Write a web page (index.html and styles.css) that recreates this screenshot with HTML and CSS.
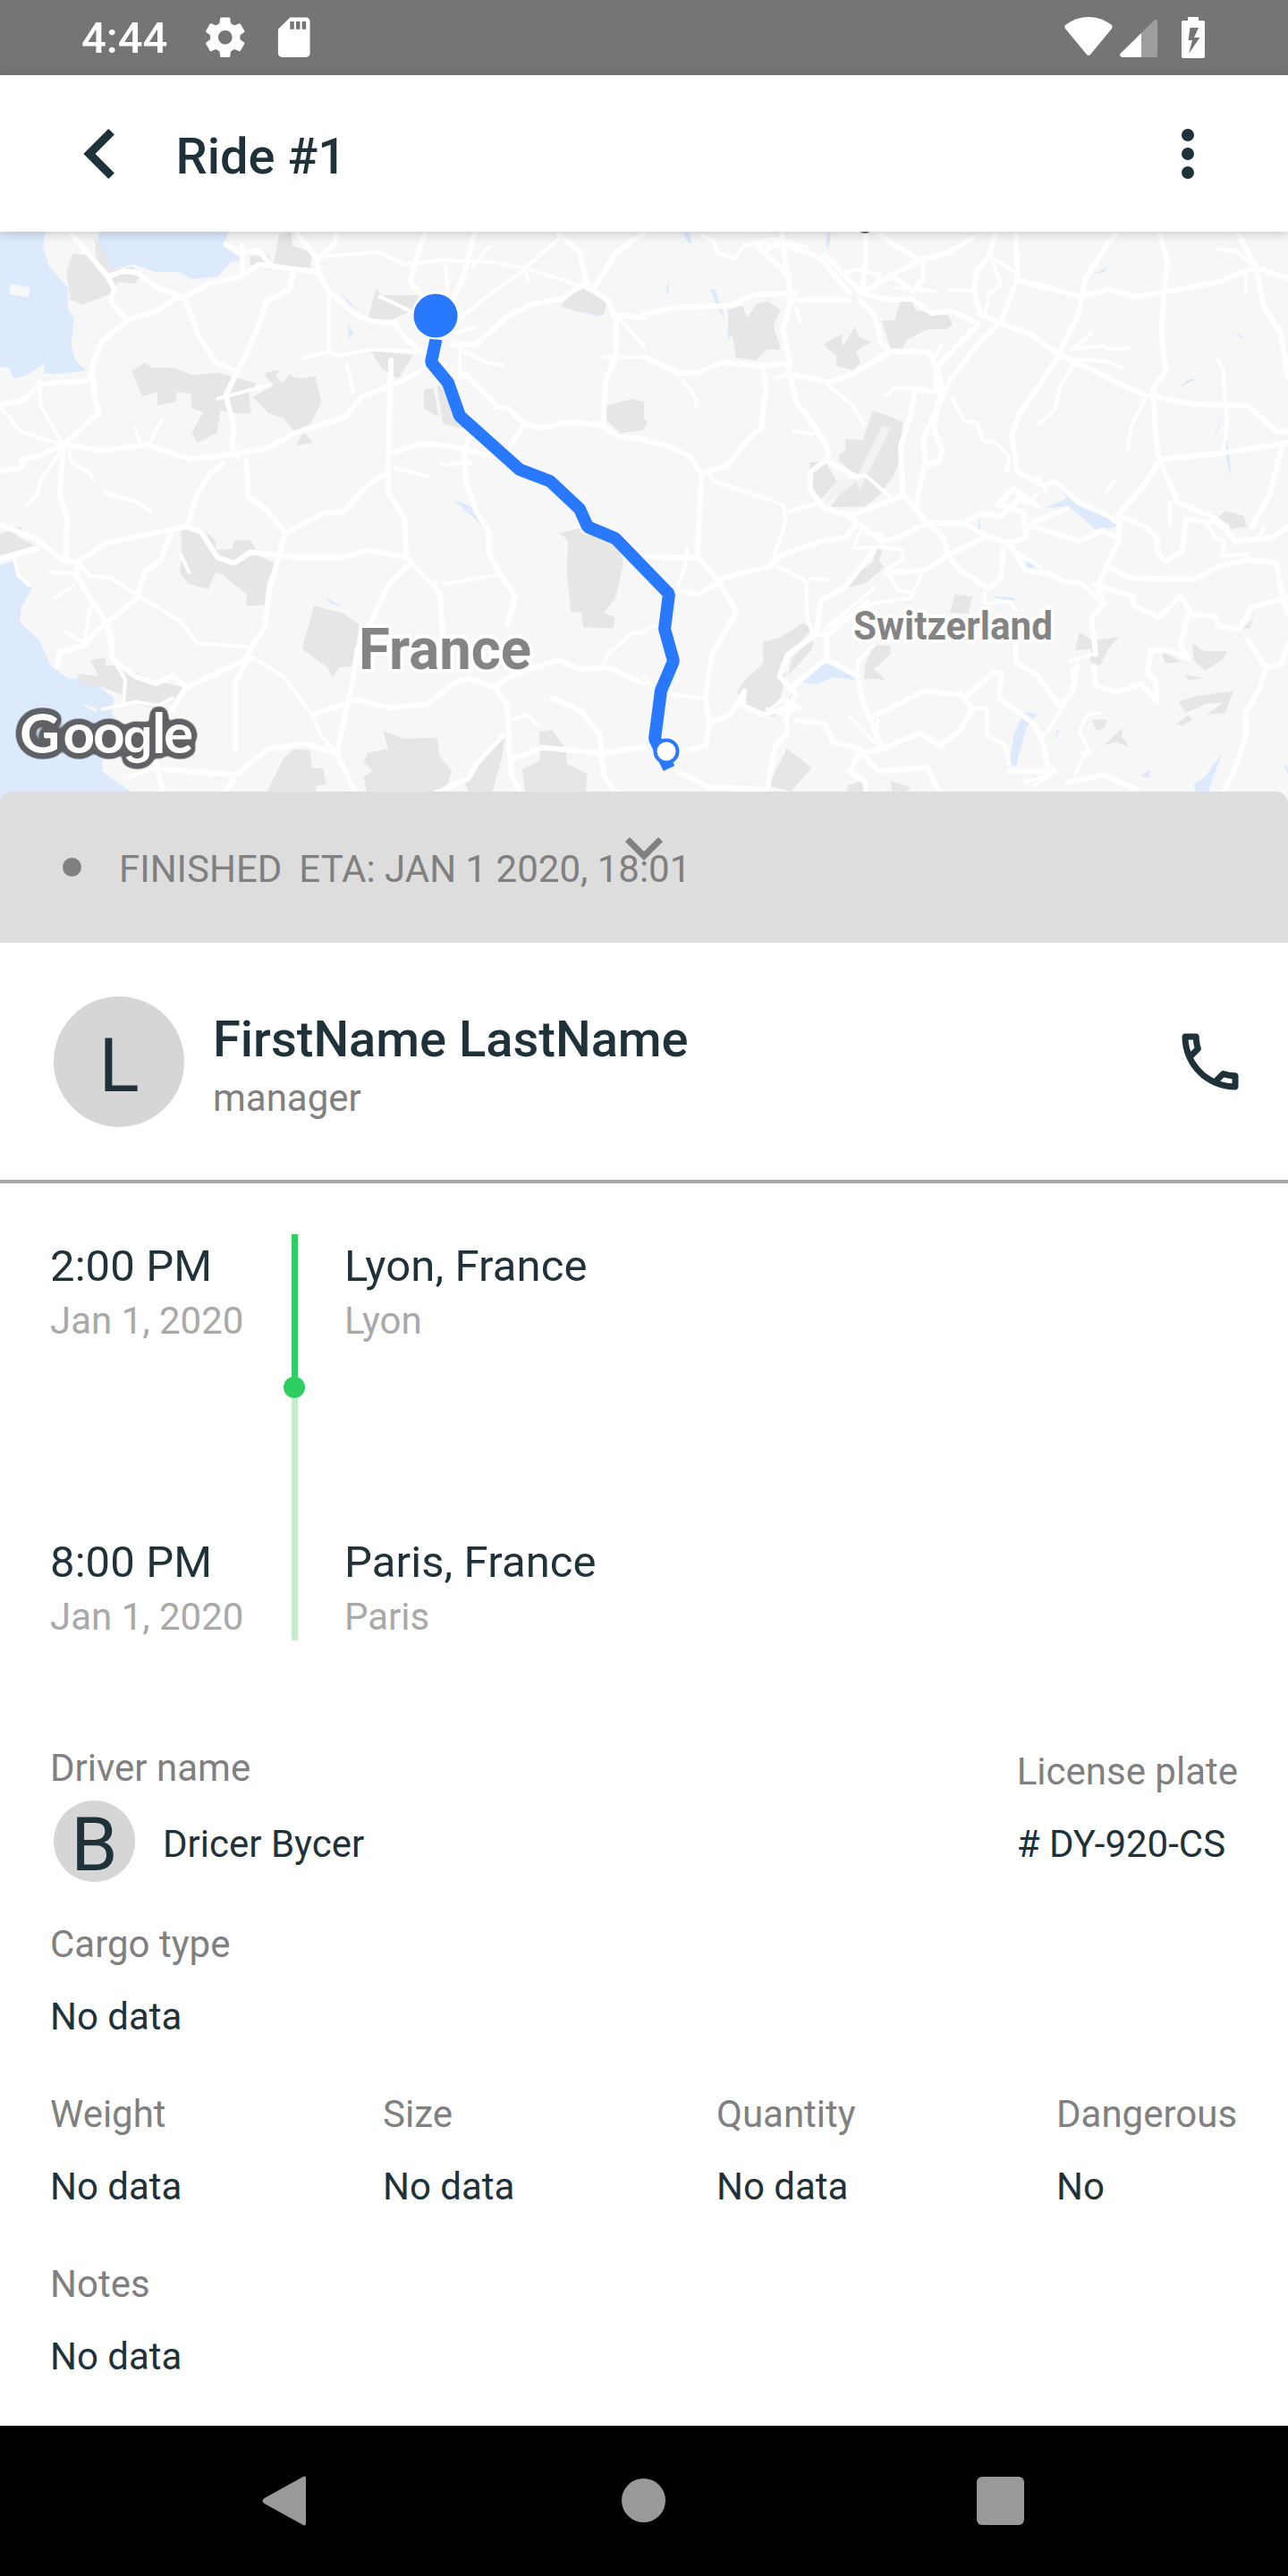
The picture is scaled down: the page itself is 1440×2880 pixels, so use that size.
FILE: index.html
```html
<!DOCTYPE html>
<html lang="en">
<head>
<meta charset="utf-8">
<title>Ride #1</title>
<link rel="stylesheet" href="styles.css">
</head>
<body>
<div class="status">
  <span class="clock">4:44</span>
  <svg class="gear" viewBox="0 0 24 24"><path d="M19.43 12.98c.04-.32.07-.64.07-.98s-.03-.66-.07-.98l2.11-1.65c.19-.15.24-.42.12-.64l-2-3.46c-.12-.22-.39-.3-.61-.22l-2.49 1c-.52-.4-1.08-.73-1.69-.98l-.38-2.65C14.46 2.18 14.25 2 14 2h-4c-.25 0-.46.18-.49.42l-.38 2.65c-.61.25-1.17.59-1.69.98l-2.49-1c-.23-.09-.49 0-.61.22l-2 3.46c-.13.22-.07.49.12.64l2.11 1.65c-.04.32-.07.65-.07.98s.03.66.07.98l-2.11 1.65c-.19.15-.24.42-.12.64l2 3.46c.12.22.39.3.61.22l2.49-1c.52.4 1.08.73 1.69.98l.38 2.65c.03.24.24.42.49.42h4c.25 0 .46-.18.49-.42l.38-2.65c.61-.25 1.17-.59 1.69-.98l2.49 1c.23.09.49 0 .61-.22l2-3.46c.12-.22.07-.49-.12-.64l-2.11-1.65zM12 15.5c-1.93 0-3.5-1.57-3.5-3.5s1.57-3.5 3.5-3.5 3.5 1.57 3.5 3.5-1.57 3.5-3.5 3.5z"/></svg>
  <svg class="card" viewBox="0 0 24 24"><path d="M18 2h-8L4 8v12c0 1.1.9 2 2 2h12c1.1 0 2-.9 2-2V4c0-1.1-.9-2-2-2zm-6 6h-2V4h2v4zm3 0h-2V4h2v4zm3 0h-2V4h2v4z"/></svg>
  <svg class="signals" viewBox="0 0 160 84">
    <path d="M1 28Q13 19 27 19T53 28Q54 30 53 32L29 61Q27 63 25 61L1 32Q-.5 30 1 28Z"/>
    <path d="M86 37V64H64Q61 62 62.500 60Z"/>
    <path d="M86 37L100 23Q104 20.500 104 24V62Q104 64 102 64H86Z" opacity=".3"/>
    <path fill-rule="evenodd" d="M138 19h12v4h5q2 0 2 2v38q0 2-2 2h-22q-2 0-2-2v-38q0-2 2-2h5zM140.500 31l-2 14h4.500l-4 15 12.500-18h-6.500l5-11z"/>
  </svg>
</div>

<header class="appbar">
  <svg class="back" viewBox="0 0 24 24"><path d="M15.410 7.410L14 6l-6 6 6 6 1.410-1.410L10.830 12z"/></svg>
  <h1 class="title">Ride #1</h1>
  <div class="more"><i></i><i></i><i></i></div>
</header>

<svg class="map" viewBox="0 0 1440 640">
  <defs>
    <filter id="halo" x="-20%" y="-40%" width="140%" height="180%" color-interpolation-filters="sRGB">
      <feGaussianBlur in="SourceAlpha" stdDeviation="4"/>
      <feComponentTransfer><feFuncA type="linear" slope="25" intercept="-.7"/></feComponentTransfer>
      <feComposite in2="SourceAlpha" operator="over" result="spread"/>
      <feFlood flood-color="#5f6165"/>
      <feComposite in2="spread" operator="in"/>
      <feMerge><feMergeNode/><feMergeNode in="SourceGraphic"/></feMerge>
    </filter>
  </defs>
  <g transform="translate(0 -9) scale(.459184 .408163)">
    <g class="water">
      <path d="M0 0H112L105 65 120 118 165 175V235L180 258 173 330 182 370 208 403 133 412 106 410 110 382 70 412 35 425 20 394H0Z"/>
      <path d="M243 0H560L547 65 585 85 588 100 560 108 530 145 467 152 437 133H380L325 112 265 126 262 95 237 60Z"/>
      <path d="M0 935L35 922 45 965 78 1000 52 1050 48 1092 95 1142 125 1213 165 1245 215 1245 278 1300 272 1340 300 1400 250 1470V1502L325 1560V1600H0Z"/>
      <path d="M830 187L872 238 846 215ZM848 275L861 300 848 318ZM1104 757L1148 775 1187 840ZM793 1023L832 1048 805 1042ZM1364 226L1472 246 1456 254 1400 238ZM540 945L570 933 545 952Z"/>
    </g>
    <path class="islet" d="M25 165L74 175 70 203 23 193ZM198 1315L237 1328 234 1340Z"/>
    <g class="park">
      <path d="M177 82L235 90 230 40 262 95 265 145 275 190 200 222 170 208 162 130Z"/><path d="M265 126L325 118 338 145 330 165 290 160 270 190Z"/>
      <path d="M680 30L710 22 712 60 760 80 755 125 715 118 665 112ZM608 90L655 85 665 130 610 112Z"/>
      <path d="M320 405L353 380 369 395H420L470 415 530 408 625 438 605 465 612 520H562L537 510 528 573 480 601 467 572 495 517 467 505 465 465 430 462 428 488 383 498V462L346 473Z"/>
      <path d="M643 410L680 400 672 420 688 438 704 413 728 425 768 418 783 490 758 545 718 573 690 532 655 520 615 475 664 445Z"/><path d="M738 570L762 600 722 607Z"/>
      <path d="M917 175L927 196H1020L1000 240 950 266 896 258ZM902 348L1006 360 970 425 930 398Z"/>
      <path d="M1032 455L1055 450 1069 530 1032 508ZM1064 445L1100 440 1130 562 1078 548Z"/>
      <path d="M1364 225L1395 188 1420 178 1478 215 1470 252 1400 238ZM1474 500L1540 480 1568 488V566L1512 573 1478 540Z"/>
      <path d="M440 840L490 835 525 868 527 893 565 892 570 868 610 868 632 910 672 932 650 980 645 1045 600 1047V1015L540 960 525 955 507 1000 460 988 438 955 443 905Z"/>
      <path d="M0 850L55 828 40 855 85 882 0 910ZM765 1046L838 1068 875 1100 860 1212 825 1215 810 1245 797 1215 735 1165Z"/>
      <path d="M1362 848L1410 835 1420 850 1508 870 1517 935 1498 1028 1470 1065 1497 1078 1494 1109 1420 1105 1416 1063 1390 1066 1380 950 1383 870Z"/>
      <path d="M188 1233L240 1240 220 1195 257 1188 258 1210 300 1212 370 1250 445 1270 420 1310 375 1327 300 1308 295 1290 250 1270 195 1262Z"/>
      <path d="M645 1570L690 1465 715 1440 755 1442 760 1490 787 1493 795 1535 770 1540 770 1570ZM932 1388L980 1410 1065 1408 1070 1458 1100 1500 1078 1570H895L885 1515 908 1500 885 1475 895 1450 945 1438ZM1128 1520L1170 1465 1205 1410 1230 1412 1220 1470 1195 1570H1145ZM1272 1495L1315 1470 1313 1392 1345 1387 1378 1440 1380 1480 1430 1508 1425 1570H1280Z"/>
    </g>
    <g class="roads major">
      <path d="M0 497L60 482 95 440 220 430 225 385 248 322 310 265 385 238 425 205 450 200 510 165 590 145 630 112 775 133 800 185 860 245 905 268 960 272 990 320 1030 350"/>
      <path d="M225 385L230 470 240 518 155 605 88 640 55 645 50 670 0 678M155 605L250 622 355 605 465 645 570 632 650 615 715 575 840 530 880 475 980 430 1040 390"/>
      <path d="M175 30L210 75 262 145 278 180 270 215 310 265M262 145L300 130 335 135 375 170 450 205M550 55L580 80 630 75 665 120M590 60L590 130"/>
      <path d="M715 133L705 180 650 213 625 290 600 355 550 470 570 560 565 610 580 640M450 205L485 310 525 380 575 405"/>
      <path d="M600 650L605 750 650 785 695 848 680 905 655 1010 645 1105 610 1165 573 1260V1440M695 848L790 793 835 790 900 712 945 680 950 440 952 375"/>
      <path d="M545 655L515 680 480 740 455 830 375 848 260 875 190 925 155 925 90 865 0 825M455 830L490 845 530 915 570 930 610 900 735 915H830L900 895 990 915M0 918L90 890"/>
      <path d="M155 605L145 745 163 800 160 925M190 925L185 965 262 1100 275 1195 330 1240 380 1260 420 1238 455 1270M610 1190L500 1245 455 1270 415 1335"/>
      <path d="M415 850L390 925 355 950 330 1030 240 1110 205 1155 145 1175 140 1213M262 1090L275 1150"/>
      <path d="M945 680V735L985 810 990 915 1070 1010 1078 1120M990 940L945 990 905 1090 870 1165 860 1250 845 1320 820 1450 870 1570"/>
      <path d="M1140 590L1130 620 1135 710 1160 790 1190 840V900L1220 965 1255 1020 1235 1100M950 630L1020 603 1090 608 1190 635 1240 610 1280 545"/>
      <path d="M1130 410L1210 500 1240 508 1280 550 1320 560 1380 545 1460 550 1510 585 1568 590"/>
      <path d="M1100 330H1160L1240 250 1300 220 1370 205 1420 165 1480 210 1500 260V360L1475 430 1468 550M1490 250L1568 257M1360 30L1410 75 1430 170M1568 25L1500 80 1450 170"/>
      <path d="M1035 25L1010 105 1000 160 1030 200M1155 25L1130 140 1085 250M720 22L770 95 775 133M820 22L815 55 775 95"/>
      <path d="M820 1450L740 1425 650 1440 575 1510 400 1495M575 1510L540 1570M1140 1245L1105 1260 1040 1315 950 1327 870 1305 760 1345M1140 1245L1205 1270 1235 1320 1240 1430 1245 1510 1270 1570"/>
      <path d="M1205 1270L1250 1235 1360 1195 1410 1220 1480 1215 1568 1260M1240 1470L1320 1435 1460 1450 1568 1435M1345 1300L1415 1335 1460 1400 1470 1510 1505 1570M1225 1400L1160 1480 1140 1520 1060 1560M380 1480L400 1570"/>
    </g>
    <g class="roads minor">
      <path d="M95 430L100 500 150 600M0 500L50 570 150 605M330 560L340 600M395 535L365 600M165 610L175 655 220 685 228 705M150 620L100 700 90 745 65 770M255 738L330 760 368 788"/>
      <path d="M800 185L800 350 820 362 905 345 1025 352M740 368L800 352M775 92L920 78 985 112 1070 100 1190 105 1280 122 1400 165M1360 42L1280 120 1285 160M1280 125L1190 195 1110 270"/>
      <path d="M530 480L660 440M845 385L860 460M925 200L1000 240M1085 115L1090 185M1190 65L1150 120M1110 300L1155 285M1060 370L1100 400M1130 350L1185 380 1225 388M1120 330V420M1500 250L1568 335M1470 365H1568M1075 660L1145 655M960 670L1040 692M1568 1120L1540 1120 1480 1180 1465 1215"/>
      <path d="M195 935L220 965 270 970 330 1015 440 1090 480 1150 610 1160M610 1185L690 1240 760 1345 785 1410 820 1450M120 955L190 960M180 990L135 1023M160 1118L205 1150 220 1050M1060 1010L1060 980M1080 988L1210 962M280 1200L305 1250 300 1320M250 1330L330 1310 385 1320 420 1300M440 905L460 955M35 920L45 965 70 990M315 1515L385 1490M1240 1360L1285 1345 1310 1375"/>
    </g>
  </g>
  <g transform="translate(720 -9) scale(.459184 .408163)">
    <g class="water">
      <path d="M95 25L110 22 117 55 107 50ZM447 22H454L451 68 443 60ZM52 185L61 155 60 198ZM160 178L175 182 196 258 183 240ZM200 292L215 293 207 320ZM1095 137L1131 118 1118 135ZM1440 292L1460 315 1450 313ZM1300 452L1320 430 1350 420ZM1410 525L1382 598 1400 560ZM1417 585L1425 630 1430 695 1418 650Z"/>
      <path d="M1000 715L1055 765 1110 785 1155 825 1145 833 1100 837 1050 790 1035 775 975 780 1015 760 1030 750ZM817 803L820 845 810 848ZM715 930L743 892 737 915ZM908 922L950 935V945L925 940ZM848 1020L905 1026 900 1033 860 1026ZM388 1258L400 1230 440 1205 520 1230 515 1250 460 1242 420 1262ZM362 1285L355 1310 352 1300ZM925 1338L958 1342 930 1385 905 1488 890 1480 900 1400ZM1408 1450L1372 1560H1345L1338 1538 1365 1515ZM1232 1493L1230 1517 1208 1515ZM1555 1478L1568 1490V1510ZM1018 1382L1000 1410 1005 1390Z"/>
    </g>
    <g class="park">
      <path d="M205 235L240 225 250 258 275 220 302 212 333 238 315 280 333 345 300 345 272 375 223 366 218 320 205 290ZM578 265H610L625 210 652 212 662 238 740 250 752 275 740 288 690 290 640 318 630 342H600ZM437 330L480 303 485 335 513 283 525 312 552 325 515 350 528 380 510 402 467 390 470 365Z"/>
      <path d="M557 512L630 542 625 640 608 690 570 747 538 775 453 777 480 735 520 695 475 650 473 635 490 620V590L533 593ZM403 655L440 650 470 705 430 757 405 715ZM570 887L580 895 572 925 585 940 540 985 495 998 510 965 555 930Z"/>
      <path d="M290 1145L330 1135 385 1095 410 1108 335 1205 345 1240 320 1350 285 1350 255 1330 225 1285 250 1245 290 1205ZM412 1135L410 1165 350 1240 360 1190ZM348 1438L408 1490 358 1555 305 1540 315 1510ZM535 1247L540 1200 560 1155H600V1180L560 1220 587 1248ZM757 1015L800 1022 790 1070 745 1065ZM1395 808L1415 787 1460 800 1467 830 1430 837ZM495 1540L530 1525 540 1570H495Z"/>
      <path d="M1060 1120L1090 1140 1110 1140 1155 1132 1130 1165 1110 1210 1085 1200 1090 1165 1050 1168ZM1258 1170L1308 1200 1270 1205ZM1335 1148L1358 1170 1420 1172 1410 1192 1368 1225 1338 1195ZM1090 1358L1128 1360 1120 1382 1102 1390ZM1302 1310L1340 1295 1435 1280 1425 1310 1415 1340 1370 1345 1410 1312 1370 1315 1320 1340ZM1315 1235L1360 1245 1325 1250ZM1297 1370L1325 1345 1335 1360 1310 1375ZM1120 1430L1165 1380 1163 1405 1182 1435 1150 1420ZM1485 1080L1475 1110 1458 1108ZM0 535L8 543 0 560ZM600 1525L650 1545 635 1560 605 1560Z"/>
    </g>
    <path class="park-gap" d="M580 555L600 560 525 730 515 700ZM470 705L540 690 430 780Z"/>
    <g class="roads major">
      <path d="M0 248L90 228 210 225 270 195 370 190M355 210H500M525 190L600 210 650 205 700 245 750 240 815 275 715 390M335 25L345 110 360 205 338 290 355 380M345 60L270 55 355 145M350 60L430 95 500 190M440 85L530 190M540 25V110L530 190 670 100 740 80 800 40"/>
      <path d="M570 25L610 60 680 105V150L655 185 600 140M525 210L560 250 580 330 600 350 695 352 712 400 710 460M355 380L290 390 190 380 130 410 85 410 0 365M290 390L297 455 285 560 250 595 205 660 140 685 110 635 50 605 0 595M600 350L510 410 450 435 350 410M350 385L370 490 400 530 450 620 445 650 520 695"/>
      <path d="M855 25L840 90 810 130 803 185 820 250 920 295 940 300 1010 360 1090 400 1150 435 1220 470 1340 495 1470 498 1540 570 1568 568M905 25L910 150 870 265 820 320 745 430 680 590 685 650 660 780 690 820"/>
      <path d="M715 390L725 450 705 560 725 620 720 650 680 665M710 460L660 455 650 520 625 610 630 740 690 820"/>
      <path d="M910 155L1065 200 1130 180 1200 200 1280 185 1400 160 1490 120M1065 200L1060 240 1005 370 970 430 915 520 895 580 910 680 975 720 1000 705 1060 765 1130 800 1155 820M1065 200L1075 150 1120 70 1150 25M1255 25L1275 100 1265 200 1260 300 1270 405 1240 450 1245 570 1255 650 1215 720 1160 790 1155 870 1130 930 1105 990 1120 1040 1090 1080 1100 1180"/>
      <path d="M1445 25L1490 120 1568 150M1490 120L1510 230 1550 300 1568 420M1568 600L1400 630 1255 645 1300 765 1370 795 1420 830M1555 600L1525 740 1480 830"/>
      <path d="M140 685L130 915 20 912 0 915M130 915L180 975 225 1065 165 1180 150 1300 160 1370 150 1430 80 1450M180 975L300 940 340 905 430 870 490 860 520 820 500 800 560 775 630 745M85 1005L130 1015 180 985"/>
      <path d="M500 800L440 780 405 730 405 680 440 650M520 820L580 870 630 855 690 820 780 820 830 855 890 875 930 860 925 790 860 770 900 725 960 775M775 820L820 795 870 800 910 760M690 820L730 860 740 910 830 860M740 910L770 950 840 1000 870 970 875 890M740 910L680 950 590 955M890 875L930 950 990 960 1020 980 1065 985 1120 1040"/>
      <path d="M560 895L490 995 430 1035 420 1125 350 1180 330 1240 370 1290 345 1330 350 1395 320 1430 300 1550M410 1125H450L545 1035M445 1130V1190L360 1270M440 1190L520 1240 530 1300 580 1440 520 1450"/>
      <path d="M160 1370L210 1345 245 1280 240 1320 290 1345 370 1320M370 1360L440 1370 460 1420 530 1440 500 1500 540 1530V1570M530 1450L570 1500 690 1490 720 1560M560 1350L680 1280 770 1290 800 1330 770 1390 720 1430 670 1395 580 1440M780 1300L850 1230H870L865 1300 950 1370 975 1430 980 1480 1000 1500 890 1500"/>
      <path d="M905 1150V1200L960 1240 1010 1320 1040 1290 1055 1210M1095 1215L1100 1265 1150 1285 1210 1260 1250 1310 1245 1250 1225 1230 1235 1170 1280 1170 1325 1190 1305 1150 1330 1060 1305 1020 1255 1080 1190 1045V1020L1110 995M1330 1070L1390 1075 1400 1105 1450 1110 1480 1050 1568 1025"/>
      <path d="M1130 940L1180 970 1340 975 1400 940 1470 920 1540 930 1550 1000 1568 1070M1470 1140L1515 1220 1500 1270 1465 1340V1410L1440 1490 1410 1560M1515 1215L1550 1210 1568 1150M80 1500L160 1545 300 1550M1030 1530L1120 1510 1200 1550"/>
      <path d="M1155 800L1220 830 1250 860V900L1270 925 1310 900 1320 810 1400 820 1440 870 1530 860 1568 830M925 830L1030 780M930 825L1060 870 1115 840 1150 860"/>
    </g>
    <g class="roads minor">
      <path d="M140 30L170 50 180 80 220 95 245 60 310 40 400 65M300 75L340 35M485 135L520 125 575 140 560 175M615 175L710 185M745 180L800 185M840 75L870 170 840 190 830 250M855 100L900 130M1395 70L1440 75 1480 110M1465 130V185"/>
      <path d="M590 470L610 450 680 450M725 330L705 370M750 480L780 540 810 545 825 595 855 600 890 640 882 680M1040 345L1120 335 1130 345 1180 340M1040 345L1090 300M1040 370L1130 378 1165 395M1045 390L1015 440 1000 510 960 550M1395 370L1410 400 1415 500 1420 540 1410 630M1220 480L1185 560 1178 620M95 430L128 480 125 500M365 568L410 577M370 230L380 270M320 425L350 415M440 435L510 500 535 550"/>
      <path d="M160 690L170 705 340 770 345 820 310 930 395 980 397 1080 410 1120M345 790L430 765M405 972L445 975M105 890L100 940 80 1000M500 695L540 690 600 750M530 835L510 890 580 885 630 895V920L590 950 620 1005 650 1010M540 850H580V870M560 1000L440 1110 560 1040 650 1025 680 950M560 1155L520 1200 520 1230M0 1115L30 1100M65 1290L145 1300M0 1240L20 1270M900 730L930 770 960 740M1125 735L1150 700M1280 830V765M890 890L935 920 965 940M1095 990L1130 1000M830 1010V1040L890 1035 905 1060M1035 1200L1090 1180M1040 1220L1050 1270 970 1410M1065 1450L1085 1450 1060 1390 1080 1345 1110 1340M1050 1510L1070 1460M925 1530L990 1510 950 1540M310 1330L340 1300 380 1330 330 1340 300 1330M500 1350L560 1420 570 1360M800 1325L835 1330V1400L880 1430 890 1480"/>
      <path d="M1370 820L1390 860 1415 870 1405 910 1470 905M1490 870L1510 835M960 695L980 735"/>
    </g>
  </g>
  <ellipse cx="967" cy="-1" rx="5.500" ry="3" fill="#757575"/>
  <path class="route" d="M487.500 120L482 146 501 169 514 206 581 266 615 279 648 310 657 330 688 343 748 405 743 444 753 480 739 513 732 567 748 600"/>
  <circle class="pin-end" cx="487" cy="94" r="25.500"/>
  <circle class="pin-start" cx="745" cy="581" r="12.500"/>
  <text class="place" x="401" y="489" font-size="65" textLength="193" lengthAdjust="spacingAndGlyphs">France</text>
  <text class="place" x="954" y="456" font-size="45" textLength="223" lengthAdjust="spacingAndGlyphs">Switzerland</text>
  <text class="brand" y="583" x="22 70.500 104 137.500 170 183">Goo<tspan class="brand-g">g</tspan>le</text>
</svg>

<main class="sheet">
  <div class="ride-state">
    <svg class="expand" viewBox="0 0 24 24"><path d="M7.410 8.590L12 13.170l4.590-4.580L18 10l-6 6-6-6z"/></svg>
    <i class="bullet"></i>
    <span class="state">FINISHED</span>
    <span class="state">ETA: JAN 1 2020, 18:01</span>
  </div>

  <section class="contact">
    <div class="avatar">L</div>
    <div class="who">
      <div class="name">FirstName LastName</div>
      <div class="role">manager</div>
    </div>
    <svg class="phone" viewBox="0 0 24 24"><path d="M6.540 5c.06.89.21 1.760.45 2.590l-1.200 1.200c-.41-1.200-.67-2.470-.76-3.790h1.510m9.860 12.020c.85.24 1.720.39 2.600.45v1.490c-1.320-.09-2.590-.35-3.800-.75l1.200-1.190M7.500 3H4c-.55 0-1 .45-1 1 0 9.390 7.610 17 17 17 .55 0 1-.45 1-1v-3.490c0-.55-.45-1-1-1-1.240 0-2.450-.2-3.570-.57-.1-.04-.21-.05-.31-.05-.26 0-.51.1-.71.29l-2.200 2.200c-2.830-1.450-5.150-3.760-6.590-6.590l2.200-2.200c.28-.28.36-.67.25-1.020C8.700 6.450 8.500 5.250 8.500 4c0-.55-.45-1-1-1z"/></svg>
  </section>

  <section class="timeline">
    <div class="stops">
      <div><div class="stop">2:00 PM</div><div class="sub">Jan 1, 2020</div></div>
      <div><div class="stop">8:00 PM</div><div class="sub">Jan 1, 2020</div></div>
    </div>
    <div class="track"><i class="done"></i><i class="dot"></i></div>
    <div class="stops">
      <div><div class="stop">Lyon, France</div><div class="sub">Lyon</div></div>
      <div><div class="stop">Paris, France</div><div class="sub">Paris</div></div>
    </div>
  </section>

  <section class="details">
    <div class="driver-row">
      <div>
        <div class="label">Driver name</div>
        <div class="driver"><div class="avatar small">B</div><span>Dricer Bycer</span></div>
      </div>
      <div class="field plate"><div class="label">License plate</div><div># DY-920-CS</div></div>
    </div>
    <div class="field"><div class="label">Cargo type</div><div>No data</div></div>
    <div class="cargo">
      <div class="field"><div class="label">Weight</div><div>No data</div></div>
      <div class="field"><div class="label">Size</div><div>No data</div></div>
      <div class="field"><div class="label">Quantity</div><div>No data</div></div>
      <div class="field"><div class="label">Dangerous</div><div>No</div></div>
    </div>
    <div class="field"><div class="label">Notes</div><div>No data</div></div>
  </section>
</main>

<nav class="navbar">
  <svg class="nav-back" viewBox="0 0 50 56"><path d="M49 3V53Q49 57 45 54.500L2.500 31Q-1.500 28 2.500 25L45 1.500Q49-1 49 3Z"/></svg>
  <i class="nav-home"></i>
  <i class="nav-recent"></i>
</nav>
</body>
</html>
```
FILE: styles.css
```css
* { box-sizing: border-box; }
body {
  margin: 0;
  width: 1440px;
  height: 2880px;
  display: flex;
  flex-direction: column;
  overflow: hidden;
  background: #fff;
  color: #1f323a;
  font: 42px/50px Roboto, sans-serif;
}
svg { display: block; flex: none; fill: currentColor; }
i { display: block; }

.status {
  height: 84px;
  flex: none;
  display: flex;
  align-items: center;
  padding-left: 91px;
  background: #757575;
  color: #fff;
}
.clock { width: 134px; padding-top: 2px; font-size: 49px; line-height: 58px; font-weight: 500; }
.gear, .card { width: 53.5px; height: 53.5px; }
.card { margin-left: 23px; }
.signals { width: 160px; height: 84px; margin-left: 835px; }

.appbar {
  position: relative;
  z-index: 1;
  height: 175px;
  flex: none;
  display: flex;
  align-items: center;
  padding: 0 105px 0 56px;
  background: #fff;
  box-shadow: 0 2px 12px rgba(0, 0, 0, .2);
}
.back { width: 112px; height: 112px; }
.title { margin: 7px auto 0 28.5px; font-size: 56px; line-height: 66px; font-weight: 500; }
.more { display: flex; flex-direction: column; gap: 7px; }
.more i { width: 14px; height: 14px; border-radius: 50%; background: #1f323a; }

.map { width: 1440px; height: 640px; background: #f7f7f7; }
.water { fill: #ddeafe; }
.islet { fill: #f7f7f7; }
.park { fill: #e6e6e6; }
.park-gap { fill: #f2f2f2; }
.roads path {
  fill: none;
  stroke: #fff;
  stroke-linejoin: round;
  stroke-linecap: round;
  vector-effect: non-scaling-stroke;
}
.major path { stroke-width: 6px; }
.minor path { stroke-width: 4px; }
.route { fill: none; stroke: #2979ff; stroke-width: 14px; stroke-linejoin: bevel; }
.pin-end { fill: #2979ff; stroke: #fff; stroke-width: 2px; }
.pin-start { fill: #fff; stroke: #2979ff; stroke-width: 4px; }
.place {
  font-family: Roboto, sans-serif;
  font-weight: 700;
  fill: #848484;
  stroke: #fff;
  stroke-width: 8px;
  stroke-linejoin: round;
  paint-order: stroke;
}
.brand { font: 700 62px Lato, sans-serif; fill: #fff; filter: url(#halo); }
.brand-g { font: 600 53px Inter, sans-serif; }

.sheet { position: relative; margin-top: -14px; height: 1827px; flex: none; }
.ride-state {
  position: relative;
  height: 169px;
  display: flex;
  align-items: flex-start;
  gap: 19px;
  padding: 62px 0 0 70px;
  border-radius: 14px 14px 0 0;
  background: #ddd;
  color: #808080;
}
.expand { position: absolute; left: 678px; top: 21px; width: 84px; height: 84px; }
.bullet { width: 21px; height: 21px; margin: 12px 23px 0 0; border-radius: 50%; background: #808080; }
.state { white-space: nowrap; }

.contact {
  height: 269px;
  display: flex;
  align-items: center;
  padding: 0 45px 0 60px;
  border-bottom: 4px solid #a9a9a9;
}
.avatar {
  width: 146px;
  height: 146px;
  flex: none;
  display: flex;
  align-items: center;
  justify-content: center;
  padding-top: 10px;
  border-radius: 50%;
  background: #d6d6d6;
  font-size: 84px;
  line-height: 98px;
}
.who { flex: 1; margin-left: 32px; padding-top: 9px; }
.name { font-size: 56px; line-height: 66px; font-weight: 500; margin-bottom: 8px; }
.role { color: #808080; }
.phone { width: 84px; height: 84px; }

.timeline {
  display: grid;
  grid-template-columns: 270px 7px 1fr;
  height: 454px;
  margin: 57px 56px 0;
}
.stops { display: flex; flex-direction: column; justify-content: space-between; padding: 7px 0 1px; }
.track + .stops { padding-left: 52px; }
.stop { font-size: 49px; line-height: 58px; margin-bottom: 7px; letter-spacing: .1px; }
.sub { color: #a9a9a9; }
.track { position: relative; background: #c4edcc; }
.done { height: 171px; background: #2dcf63; }
.dot { position: absolute; left: -9px; top: 159px; width: 24px; height: 24px; border-radius: 50%; background: #2dcf63; }

.details { margin: 118px 56px 0; display: flex; flex-direction: column; gap: 59px; }
.label { color: #808080; }
.field { display: flex; flex-direction: column; gap: 31px; }
.driver-row { display: flex; justify-content: space-between; margin-bottom: -14px; }
.driver { display: flex; align-items: center; gap: 31px; margin: 11px 0 0 4px; }
.driver span { padding-top: 7px; }
.avatar.small { width: 91px; height: 91px; padding-top: 9px; }
.plate { padding-top: 4px; }
.cargo { display: grid; grid-template-columns: 372px 373px 380px 1fr; white-space: nowrap; }

.navbar {
  height: 168px;
  flex: none;
  display: flex;
  align-items: center;
  padding: 0 0 1px 293px;
  background: #000;
  color: #999;
}
.nav-back { width: 50px; height: 56px; }
.nav-home { width: 49px; height: 49px; margin: 0 348px 0 352px; border-radius: 50%; background: #999; }
.nav-recent { width: 53px; height: 54px; border-radius: 6px; background: #999; }
```
